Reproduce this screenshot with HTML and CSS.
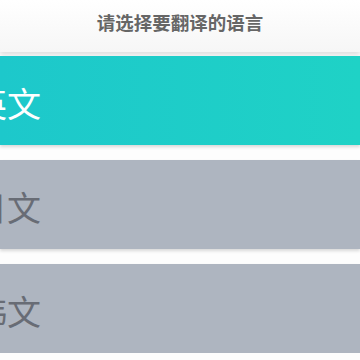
FILE: index.html
```html
<!DOCTYPE html>
<html>
<head>
    <title>选择语言</title>
    <link rel="stylesheet" href="styles.css">
</head>
<body>
    <div class="header">请选择要翻译的语言</div>
    <div class="lang-list">
        <div class="lang-item active">英文</div>
        <div class="lang-item">日文</div>
        <div class="lang-item">韩文</div>
    </div>
</body>
</html>
```

FILE: styles.css
```css
html, body {
    margin: 0;
    padding: 0;
    overflow: hidden;
}
body {
    background: #fdfdfd;
    font-family: "Noto Sans CJK SC", "Noto Sans", sans-serif;
}
.header {
    height: 50px;
    padding-top: 2px;
    line-height: 41px;
    text-align: center;
    font-size: 18.5px;
    font-weight: bold;
    color: #666666;
    background: linear-gradient(#ffffff, #f6f6f6);
    box-shadow: 0 3px 5px rgba(0, 0, 0, 0.12);
    margin-bottom: 4px;
}
.lang-list {
    display: flex;
    flex-direction: column;
    gap: 15px;
}
.lang-item {
    height: 89px;
    display: flex;
    align-items: center;
    padding-top: 4px;
    box-sizing: border-box;
    text-indent: -27px;
    font-size: 34px;
    color: #686c75;
    background: #aeb5c0;
    box-shadow: 0 2px 3px rgba(0, 0, 0, 0.15);
    white-space: nowrap;
}
.lang-item.active {
    color: #ffffff;
    background: linear-gradient(90deg, #1dc8cb, #1fd2c6);
}
```
